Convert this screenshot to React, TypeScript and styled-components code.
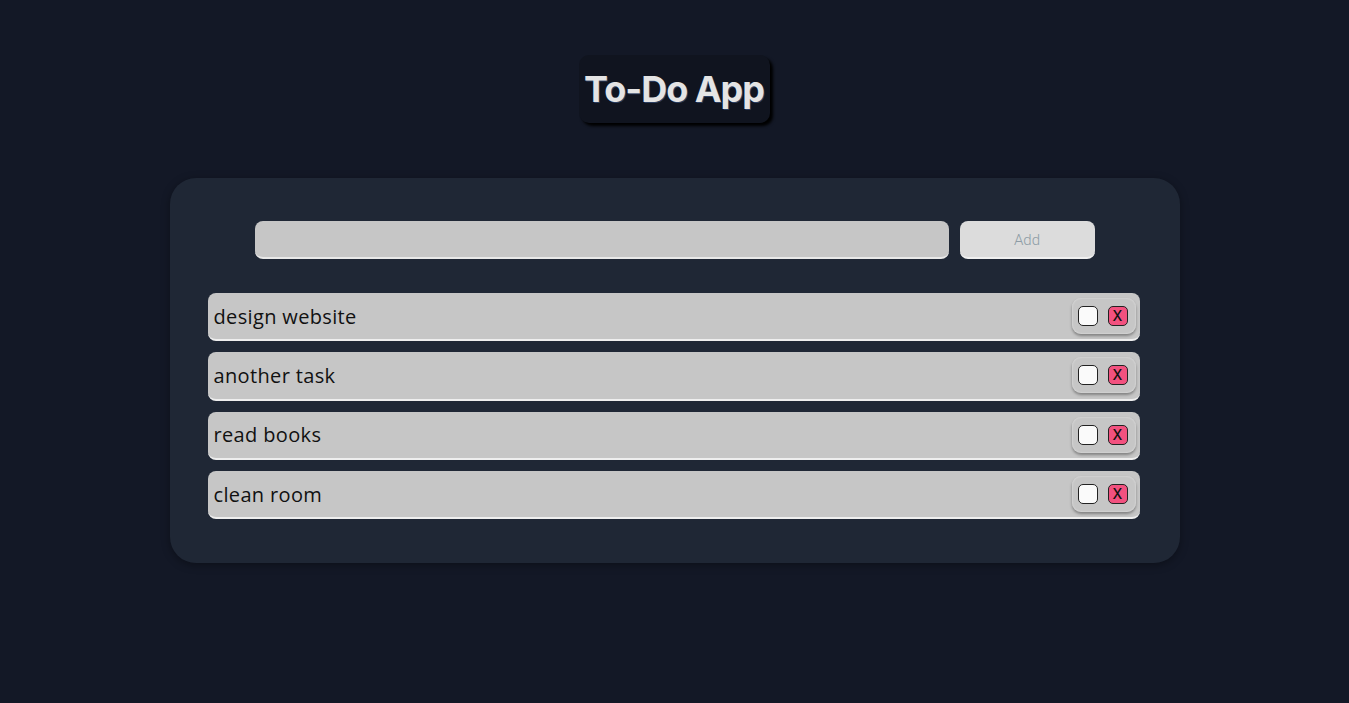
import React, { useState } from 'react';
import styled, { createGlobalStyle } from 'styled-components';

interface Task {
	id: number;
	text: string;
	done: boolean;
}

const GlobalStyle = createGlobalStyle`
	body {
		margin: 0;
		background: #131826;
		font-family: 'Open Sans', 'Lato', sans-serif;
	}
`;

export default function App() {

	const [tasks, setTasks] = useState<Task[]>([
		{ id: 1, text: 'design website', done: false },
		{ id: 2, text: 'another task', done: false },
		{ id: 3, text: 'read books', done: false },
		{ id: 4, text: 'clean room', done: false },
	]);
	const [value, setValue] = useState('');

	const addTask = () => {
		if (!value.trim()) return;
		setTasks([...tasks, { id: Date.now(), text: value, done: false }]);
		setValue('');
	}

	return (
		<Container>
			<GlobalStyle />
			<Title>To-Do App</Title>
			<Card>
				<Form>
					<Input value={value} onChange={(e) => setValue(e.target.value)} />
					<AddButton onClick={addTask}>Add</AddButton>
				</Form>
				<List>
					{tasks.map((task) => (
						<Row key={task.id}>
							<TaskText $done={task.done}>{task.text}</TaskText>
							<Controls>
								<Check
									$checked={task.done}
									onClick={() => setTasks(tasks.map((t) => t.id === task.id ? { ...t, done: !t.done } : t))}
								/>
								<Remove onClick={() => setTasks(tasks.filter((t) => t.id !== task.id))}>X</Remove>
							</Controls>
						</Row>
					))}
				</List>
			</Card>
		</Container>
	);
}

const Container = styled.div`
	display: flex;
	flex-direction: column;
	align-items: center;

	min-height: 100vh;
	padding-top: 55px;
	box-sizing: border-box;
`;

const Title = styled.h1`
	margin: 0;
	padding: 0 6px 0 5px;
	height: 68px;
	display: flex;
	align-items: center;

	background: #10141f;
	border-radius: 10px;
	box-shadow: 3px 3px 3px #000;

	font-family: 'Inter', sans-serif;
	font-size: 36px;
	font-weight: 700;
	letter-spacing: -1px;
	color: #e4e4e4;
	text-shadow: 1px 1px 0 rgba(60, 90, 140, 0.6);
`;

const Card = styled.div`
	margin-top: 55px;
	width: 1010px;
	box-sizing: border-box;
	padding: 43px 40px 44px 38px;

	background: #1f2735;
	border-radius: 26px;
	box-shadow: 0 2px 8px rgba(0, 0, 0, 0.35);
`;

const Form = styled.div`
	display: flex;
	justify-content: center;
	gap: 11px;
	padding-left: 2px;
`;

const Input = styled.input`
	width: 694px;
	height: 38px;
	box-sizing: border-box;
	border: none;
	border-bottom: 2px solid #e8e8e8;
	border-radius: 8px;
	background: #c6c6c6;
	padding: 0 10px;
	font-size: 16px;
	outline: none;
`;

const AddButton = styled.button`
	width: 135px;
	height: 38px;
	padding-top: 3px;
	border: none;
	border-bottom: 2px solid #f0f0f0;
	border-radius: 8px;
	background: #dcdcdc;
	color: #8e9ca6;
	font-family: 'Roboto', sans-serif;
	font-size: 15px;
	font-weight: 300;
	cursor: pointer;
`;

const List = styled.div`
	display: flex;
	flex-direction: column;
	gap: 11px;
	margin-top: 34px;
`;

const Row = styled.div`
	display: flex;
	align-items: center;
	justify-content: space-between;

	height: 48.3px;
	padding: 0 4px 0 6px;
	box-sizing: border-box;

	background: #c6c6c6;
	border-bottom: 2px solid #eeeeee;
	border-radius: 8px;
`;

const TaskText = styled.span<{ $done: boolean }>`
	font-size: 20px;
	letter-spacing: 0.35px;
	color: #111;
	text-decoration: ${(p) => (p.$done ? 'line-through' : 'none')};
`;

const Controls = styled.div`
	display: flex;
	align-items: center;
	gap: 10px;

	height: 36px;
	padding: 0 8px 0 6px;
	box-sizing: border-box;

	background: #c6c6c6;
	border-radius: 9px;
	box-shadow: 0 2px 3px rgba(0, 0, 0, 0.35), inset 0 0 2px #e8e8e8;
`;

const Check = styled.div<{ $checked: boolean }>`
	width: 20px;
	height: 20px;
	box-sizing: border-box;
	border: 1px solid #222;
	border-radius: 5px;
	background: ${(p) => (p.$checked ? '#7ad07a' : '#fafafa')};
	cursor: pointer;
`;

const Remove = styled.button`
	width: 20px;
	height: 20px;
	padding: 0;
	box-sizing: border-box;
	border: 1px solid #222;
	border-radius: 5px;
	background: #f2517f;
	color: #111;
	font-family: 'Inter', sans-serif;
	font-size: 14px;
	font-weight: 500;
	line-height: 18px;
	cursor: pointer;
`;
